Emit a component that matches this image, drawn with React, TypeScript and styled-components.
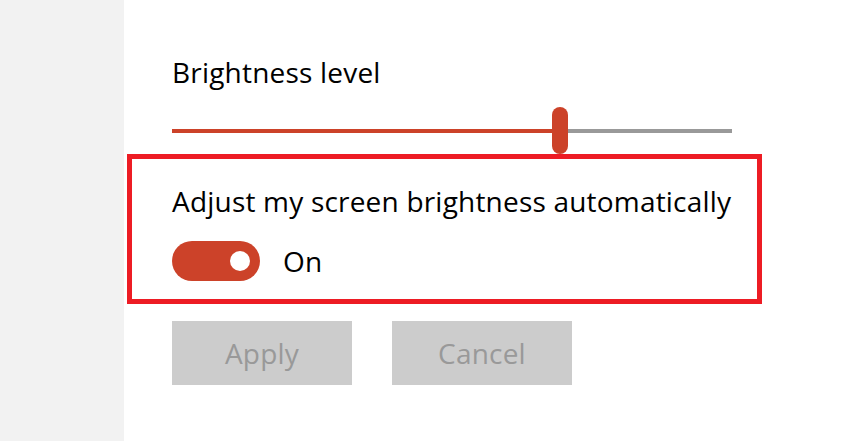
import React from "react";
import styled, { createGlobalStyle } from "styled-components";

const GlobalStyle = createGlobalStyle`
  html, body {
    margin: 0;
    padding: 0;
    background: #ffffff;
  }
  body {
    font-family: "Open Sans", "Noto Sans", "Liberation Sans", sans-serif;
    color: #000000;
    letter-spacing: 0.2px;
  }
`;

const Page = styled.div`
  display: flex;
  width: 849px;
  height: 441px;
  overflow: hidden;
`;

const Sidebar = styled.div`
  width: 124px;
  flex: 0 0 124px;
  background: #f2f2f2;
`;

const Main = styled.div`
  flex: 1;
  display: flex;
  flex-direction: column;
  padding-top: 53px;
`;

const Label = styled.div`
  font-size: 28px;
  line-height: 38px;
  margin-left: 48px;
  white-space: nowrap;
`;

const Slider = styled.div`
  position: relative;
  margin-top: 16px;
  margin-left: 48px;
  width: 560px;
  height: 47px;
`;

const Track = styled.div<{ $color: string }>`
  position: absolute;
  top: 22px;
  height: 4px;
  background: ${(p) => p.$color};
`;

const Thumb = styled.div`
  position: absolute;
  top: 0;
  width: 16px;
  height: 47px;
  border-radius: 8px;
  background: #cc4229;
`;

const Highlight = styled.div`
  margin-left: 3px;
  width: 635px;
  box-sizing: border-box;
  border: 5px solid #ed1c24;
  padding: 23px 0 18px 40px;
  display: flex;
  flex-direction: column;
`;

const ToggleRow = styled.div`
  display: flex;
  align-items: center;
  gap: 23px;
  margin-top: 21px;
`;

const Toggle = styled.div<{ $on: boolean }>`
  position: relative;
  width: 88px;
  height: 40px;
  border-radius: 20px;
  background: ${(p) => (p.$on ? "#cc4229" : "#999999")};
`;

const Knob = styled.div`
  position: absolute;
  top: 10px;
  right: 10px;
  width: 20px;
  height: 20px;
  border-radius: 50%;
  background: #ffffff;
`;

const StateText = styled.span`
  font-size: 28px;
  line-height: 38px;
  white-space: nowrap;
`;

const Buttons = styled.div`
  display: flex;
  gap: 40px;
  margin-top: 17px;
  margin-left: 48px;
`;

const Button = styled.button`
  width: 180px;
  height: 64px;
  border: none;
  padding: 0;
  background: #cccccc;
  color: #999999;
  font-family: inherit;
  letter-spacing: inherit;
  font-size: 28px;
  line-height: 38px;
  display: flex;
  align-items: center;
  justify-content: center;
`;

const value = 0.693;

export default function App() {
  const trackWidth = 560;
  const thumbLeft = Math.round(value * trackWidth) - 8;
  return (
    <>
      <GlobalStyle />
      <Page>
        <Sidebar />
        <Main>
          <Label>Brightness level</Label>
          <Slider>
            <Track $color="#999999" style={{ left: 0, width: trackWidth }} />
            <Track $color="#cc4229" style={{ left: 0, width: thumbLeft }} />
            <Thumb style={{ left: thumbLeft }} />
          </Slider>
          <Highlight>
            <StateText>Adjust my screen brightness automatically</StateText>
            <ToggleRow>
              <Toggle $on>
                <Knob />
              </Toggle>
              <StateText>On</StateText>
            </ToggleRow>
          </Highlight>
          <Buttons>
            <Button disabled>Apply</Button>
            <Button disabled>Cancel</Button>
          </Buttons>
        </Main>
      </Page>
    </>
  );
}
